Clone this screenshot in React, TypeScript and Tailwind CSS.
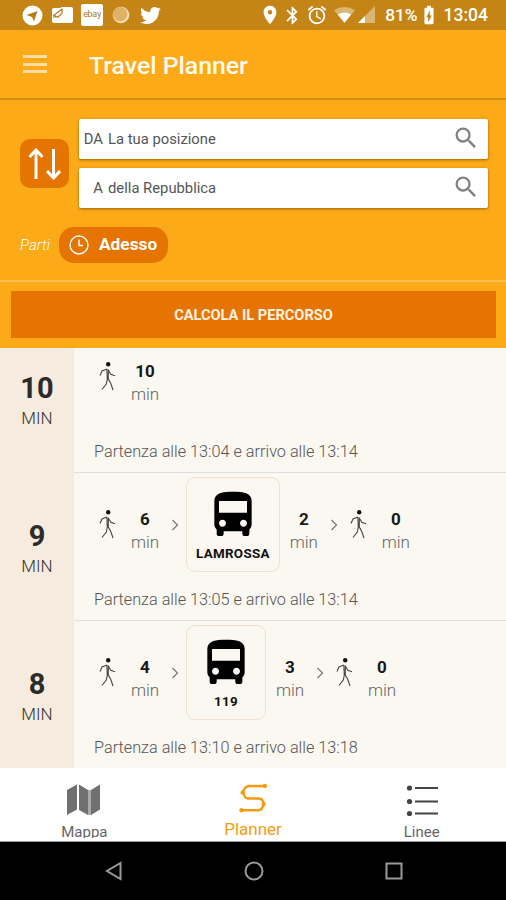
import type { ReactNode } from "react"
import { FaTwitter } from "react-icons/fa"
import { MdAlarm, MdBatteryChargingFull, MdBluetooth, MdDirectionsBus, MdLocationOn, MdSearch } from "react-icons/md"

type Trip = {
  total: number
  walk: number
  line?: string
  ride?: number
  lastWalk?: number
  from: string
  to: string
}

const trips: Trip[] = [
  { total: 10, walk: 10, from: "13:04", to: "13:14" },
  { total: 9, walk: 6, line: "LAMROSSA", ride: 2, lastWalk: 0, from: "13:05", to: "13:14" },
  { total: 8, walk: 4, line: "119", ride: 3, lastWalk: 0, from: "13:10", to: "13:18" },
]

function StatusBar() {
  return (
    <div className="flex h-[30px] shrink-0 items-center bg-[#c48516] pl-[22px] pr-[18px] text-white">
      <svg width="21" height="21" viewBox="0 0 21 21">
        <circle cx="10.5" cy="10.5" r="10" fill="white" />
        <path d="M4.5 10 15.5 6 12 16.5 10 12Z" fill="#b97c1d" />
      </svg>
      <svg className="ml-[9px]" width="21" height="18" viewBox="0 0 21 18">
        <path d="M2 2h6l2-1h9q2 0 2 2v12q0 2-2 2H2q-2 0-2-2V4q0-2 2-2Z" fill="white" />
        <path d="M1 10 10 3Q11 8 7 10Q3 12 3 9M1 11h6" fill="none" stroke="#b97c1d" strokeWidth="1.1" />
      </svg>
      <div className="ml-2 flex h-[22px] w-[22px] items-center justify-center rounded-[2px] bg-white pb-[2px] text-[9px] leading-none tracking-[-0.3px] text-[#a77a3a]">
        ebay
      </div>
      <svg className="ml-[9px]" width="18" height="18" viewBox="0 0 18 18">
        <circle cx="9" cy="9" r="8.3" fill="#f3dfb9" />
        <circle cx="8.2" cy="8.2" r="7.2" fill="#dfb266" />
      </svg>
      <FaTwitter className="ml-[10px]" size={21} />
      <div className="ml-auto flex items-center">
        <MdLocationOn size={22} />
        <MdBluetooth className="ml-px" size={21} />
        <MdAlarm className="ml-[3px]" size={22} />
        <svg className="ml-[6px]" width="21" height="18" viewBox="0 0 22 18">
          <path d="M0 4Q11-3 22 4L11 17Z" fill="white" opacity="0.4" />
          <path d="M4 8.4Q11 4.5 18 8.4L11 17Z" fill="white" />
        </svg>
        <svg className="ml-[3px]" width="18" height="18" viewBox="0 0 18 18">
          <path d="M17 0v17H0Z" fill="white" opacity="0.4" />
          <path d="M7 10v7H0Z" fill="white" />
        </svg>
        <span className="ml-[9px] mt-[2px] text-[17.3px] font-medium leading-none">81%</span>
        <MdBatteryChargingFull size={22} />
        <span className="ml-[4px] mt-[2px] text-[17.5px] font-medium leading-none">13:04</span>
      </div>
    </div>
  )
}

function SearchField({ prefix, value }: { prefix: string; value: string }) {
  return (
    <div className="flex h-10 items-center rounded-[2px] bg-white pl-[2px] pr-2 text-[14.8px] text-[#555] shadow-[0_1px_3px_rgba(120,70,0,0.7)]">
      <span className="w-[22px] text-right">{prefix}</span>
      <span className="ml-[5px] grow">{value}</span>
      <MdSearch className="mb-[2px] text-[#808080]" size={28} />
    </div>
  )
}

function WalkIcon() {
  return (
    <svg className="shrink-0" width="18" height="30" viewBox="0 0 18 30">
      <circle cx="10.2" cy="3.2" r="2.2" fill="#111" />
      <path
        d="M9 8 4 10 2 14.500M10 8.500 12.800 13.300 17 14.800M8.800 8 9.300 18 8.300 23 4 28.500M10.300 9v9l2.500 4.500 2.200 6.500"
        fill="none"
        stroke="#444"
        strokeWidth="1.1"
      />
    </svg>
  )
}

function Arrow() {
  return (
    <svg className="mx-[11px] mt-[11px] shrink-0" width="8" height="12" viewBox="0 0 8 12">
      <path d="m1.500 1 5 5-5 5" fill="none" stroke="#777" strokeWidth="1.200" />
    </svg>
  )
}

function Minutes({ value }: { value?: number }) {
  return (
    <div className="w-[30px] text-center">
      <div className="text-[17px] font-bold leading-[22px] text-[#181818]">{value}</div>
      <div className="text-[17px] font-light leading-6 text-[#666]">min</div>
    </div>
  )
}

function TripRow({ trip }: { trip: Trip }) {
  return (
    <div className="flex h-[147.7px] shrink-0">
      <div className="w-[74px] shrink-0 bg-[#f5ebde] pt-[46px] text-center">
        <div className="text-[29px] font-bold leading-9 text-[#2b2b2b]">{trip.total}</div>
        <div className="text-[17px] font-light leading-6 text-[#333]">MIN</div>
      </div>
      <div className="grow border-t border-[#dedede] bg-[#fbf8f1] pl-6">
        <div className="flex h-[113px] items-start pt-[35px]">
          <div className="pr-[14px] pt-px">
            <WalkIcon />
          </div>
          <Minutes value={trip.walk} />
          {trip.line && (
            <>
              <Arrow />
              <div className="-ml-1 -mt-[31px] mr-[9px] flex h-[95px] min-w-[80px] flex-col items-center rounded-[9px] border border-[#efe2ca] px-[9px] pt-[9px]">
                <MdDirectionsBus className="text-black" size={56} />
                <span className="mt-px text-[13.4px] font-bold leading-5 tracking-[0.3px] text-[#111]">{trip.line}</span>
              </div>
              <Minutes value={trip.ride} />
              <Arrow />
              <div className="pr-[14px] pt-px">
                <WalkIcon />
              </div>
              <Minutes value={trip.lastWalk} />
            </>
          )}
        </div>
        <p className="-ml-1 text-[16.25px] font-light leading-7 text-[#555]">
          Partenza alle {trip.from} e arrivo alle {trip.to}
        </p>
      </div>
    </div>
  )
}

function Tab({ label, active, children }: { label: string; active?: boolean; children: ReactNode }) {
  return (
    <div className={`flex flex-1 flex-col items-center ${active ? "text-[#f39c12]" : "text-[#666]"}`}>
      <div className="flex h-[50px] items-start pt-[15px]">{children}</div>
      <span className={active ? "text-[17px] leading-6" : "h-[20px] overflow-hidden pt-[4px] text-[15px] leading-5"}>
        {label}
      </span>
    </div>
  )
}

export default function App() {
  return (
    <div className="flex h-[900px] w-[506px] flex-col overflow-hidden bg-[#fcaa17] font-['Roboto',sans-serif]">
      <StatusBar />

      {/* App bar */}
      <header className="flex h-[70px] shrink-0 items-center border-b-2 border-[#d38e16] pl-[23px]">
        <div className="flex w-6 flex-col gap-[4.5px]">
          <div className="h-[3px] bg-[#fddda3]" />
          <div className="h-[3px] bg-[#fddda3]" />
          <div className="h-[3px] bg-[#fddda3]" />
        </div>
        <h1 className="ml-[42px] pt-1 text-[24.8px] font-medium text-[#fffaf0]">Travel Planner</h1>
      </header>

      {/* Journey form */}
      <section className="h-[182px] shrink-0 border-b-2 border-[#fdbf56] pl-5 pr-[18px] pt-[19px]">
        <div className="flex items-center gap-[10px]">
          <button className="flex h-[49px] w-[49px] shrink-0 items-center justify-center rounded-[10px] bg-[#e57500]">
            <svg width="33" height="32" viewBox="0 0 33 32" fill="none" stroke="white" strokeWidth="3">
              <path d="M8 31V2M1.5 9 8 2l6.5 7M25.500 1v29M19 23l6.500 7 6.500-7" />
            </svg>
          </button>
          <div className="flex grow flex-col gap-[9px]">
            <SearchField prefix="DA" value="La tua posizione" />
            <SearchField prefix="A" value="della Repubblica" />
          </div>
        </div>
        <div className="mt-[19px] flex items-center">
          <span className="w-[39px] text-[15px] font-light italic text-white">Parti</span>
          <button className="flex h-9 w-[109px] items-center rounded-[15px] bg-[#e57500] pl-[10px] text-white">
            <svg width="20" height="20" viewBox="0 0 20 20" fill="none" stroke="white" strokeWidth="1.4">
              <circle cx="10" cy="10" r="9" />
              <path d="M10 4.500v6h4" />
            </svg>
            <span className="ml-[10px] text-[17.3px] font-bold">Adesso</span>
          </button>
        </div>
      </section>
      <div className="h-[66px] shrink-0 px-[11px] pb-[10px] pt-[9px]">
        <button className="h-[47px] w-[485px] bg-[#e57500] pt-[2px] text-[14.6px] font-bold text-[#fff0e2]">
          CALCOLA IL PERCORSO
        </button>
      </div>

      {/* Results, scrolled so the first card starts above the fold */}
      <main className="flex h-[419.5px] shrink-0 flex-col justify-end overflow-hidden">
        {trips.map((trip) => (
          <TripRow key={trip.from} trip={trip} />
        ))}
      </main>

      <nav className="flex h-[74.5px] shrink-0 border-b border-[#999] bg-white">
        <Tab label="Mappa">
          <svg width="34" height="34" viewBox="0 0 34 34" fill="#707070">
            <path d="M0 7 10 1.500v25L0 32ZM12 1.500l9 5.500v25l-9-5ZM24 7l9-5.500v25L24 32Z" />
            <path d="M21 7h3v25h-3Z" fill="#aaa" />
          </svg>
        </Tab>
        <Tab label="Planner" active>
          <svg width="28" height="32" viewBox="0 0 28 32" fill="none" stroke="currentColor" strokeWidth="2.400">
            <path d="M26 3H9.500L6.500 4.500 3.700 9.500 6.500 14.500 9 15.500h11L23 16.500 25 21 22.500 26 20 27.200H2.500" />
            <g fill="currentColor" stroke="none">
              <circle cx="25.800" cy="3" r="2.200" />
              <circle cx="3.700" cy="9.500" r="2.200" />
              <circle cx="24.700" cy="21" r="2.200" />
              <circle cx="2.500" cy="27.200" r="2.200" />
            </g>
          </svg>
        </Tab>
        <Tab label="Linee">
          <svg width="32" height="34" viewBox="0 0 32 34" fill="#444" stroke="#444" strokeWidth="2">
            <path d="M9 5h23M9 18.500h23M9 30.500h23" />
            <g stroke="none">
              <circle cx="3.500" cy="5" r="2.600" />
              <circle cx="3.500" cy="18.500" r="2.600" />
              <circle cx="3.500" cy="30.500" r="2.600" />
            </g>
          </svg>
        </Tab>
      </nav>

      {/* Android navigation */}
      <div className="flex h-[58px] shrink-0 items-center justify-center gap-[121px] bg-black">
        <svg width="20" height="20" viewBox="0 0 20 20" fill="none" stroke="#999" strokeWidth="2">
          <path d="M17.500 2v16L4 10Z" />
        </svg>
        <svg width="20" height="20" viewBox="0 0 20 20" fill="none" stroke="#999" strokeWidth="2">
          <circle cx="10" cy="10" r="8.500" />
        </svg>
        <svg width="18" height="18" viewBox="0 0 18 18" fill="none" stroke="#999" strokeWidth="2">
          <rect x="1.500" y="1.500" width="15" height="15" />
        </svg>
      </div>
    </div>
  )
}
